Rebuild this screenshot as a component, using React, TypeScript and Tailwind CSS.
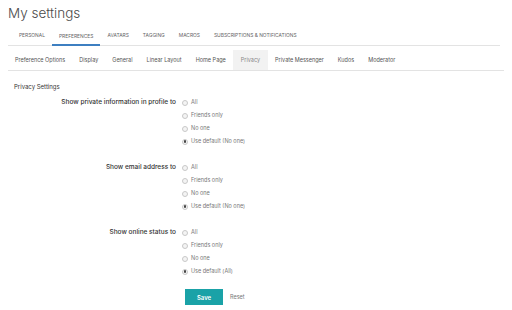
import React from "react";

const topTabs = ["Personal", "Preferences", "Avatars", "Tagging", "Macros", "Subscriptions & Notifications"];
const subTabs = ["Preference Options", "Display", "General", "Linear Layout", "Home Page", "Privacy", "Private Messenger", "Kudos", "Moderator"];

const groups = [
  { label: "Show private information in profile to", def: "Use default (No one)" },
  { label: "Show email address to", def: "Use default (No one)" },
  { label: "Show online status to", def: "Use default (All)" },
];

function Radio({ checked }: { checked?: boolean }) {
  return (
    <span className="w-[6px] h-[6px] rounded-full border border-[#c8c8c8] bg-[#f4f4f4] flex items-center justify-center">
      {checked && <span className="w-[2.5px] h-[2.5px] rounded-full bg-[#444]" />}
    </span>
  );
}

function PrivacyGroup({ label, def }: { label: string; def: string }) {
  const options = ["All", "Friends only", "No one", def];
  return (
    <div className="flex">
      <div className="w-[168px] text-right text-[6.5px] font-medium text-[#333] h-[13px] flex items-center justify-end">
        {label}
      </div>
      <div className="flex flex-col ml-[6px]">
        {options.map((o, i) => (
          <div key={o} className="h-[13px] flex items-center gap-[3px] text-[5.5px] text-[#777]">
            <Radio checked={i === 3} />
            <span>{o}</span>
          </div>
        ))}
      </div>
    </div>
  );
}

export default function App() {
  return (
    <div className="w-[512px] h-[310px] bg-white overflow-hidden px-2" style={{ fontFamily: "Inter, 'Liberation Sans', sans-serif" }}>
      <div className="h-[27px] pt-[3px] text-[13.5px] leading-[20px] font-light text-[#4a4a4a]">My settings</div>

      <div className="flex h-[19px] border-b border-[#e3e3e3] pl-[4px] mr-[4px]">
        {topTabs.map((t) => (
          <div
            key={t}
            className={`px-[7px] flex items-center uppercase text-[4.9px] text-[#666] ${
              t === "Preferences" ? "border-b-2 border-[#3d7fc1] -mb-px pt-[2px]" : ""
            }`}
          >
            {t}
          </div>
        ))}
      </div>

      <div className="flex h-[21px] mt-[4px] border-b border-[#e3e3e3]">
        {subTabs.map((t) => (
          <div
            key={t}
            className={`px-[7px] flex items-center text-[5.5px] text-[#555] ${t === "Privacy" ? "bg-[#f2f2f2] text-[#888] px-[8px]" : ""}`}
          >
            {t}
          </div>
        ))}
      </div>

      <div className="pl-[6px] pt-[11px] text-[6px] leading-[10px] text-[#333]">Privacy Settings</div>

      <div className="flex flex-col gap-[13px] mt-[4px]">
        {groups.map((g) => (
          <PrivacyGroup key={g.label} {...g} />
        ))}
      </div>

      <div className="flex items-center mt-[11px] ml-[177px]">
        <button className="w-[38px] h-[16px] bg-[#1aa2a7] text-white text-[6px] font-semibold">Save</button>
        <span className="ml-[7px] text-[5.5px] text-[#777]">Reset</span>
      </div>
    </div>
  );
}
